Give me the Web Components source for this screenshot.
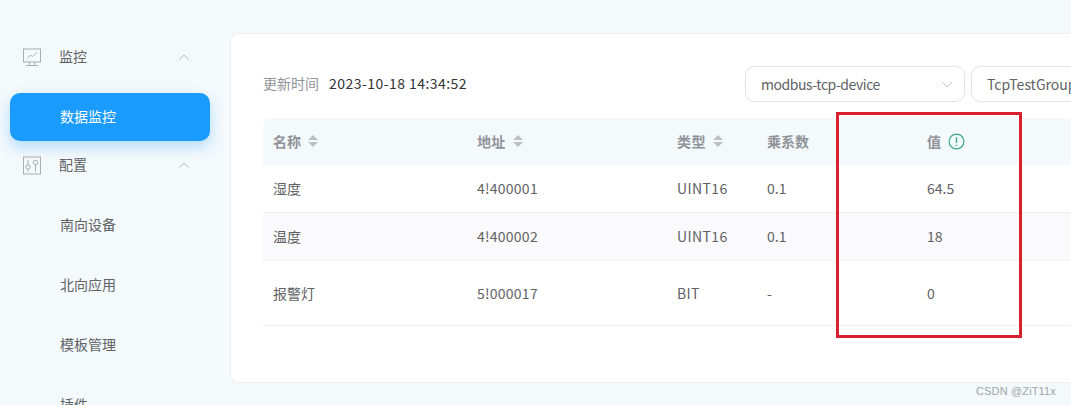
<!DOCTYPE html>
<html>
<head>
<meta charset="utf-8">
<style>
html,body{margin:0;height:405px;overflow:hidden}
body{background:#f4f9fc;font-family:"Noto Sans CJK SC","Noto Sans",sans-serif;font-size:14px;color:#444;position:relative}
#layout{display:flex;height:405px;overflow:hidden}
</style>
</head>
<body>
<div id="layout">
  <side-menu>
    <menu-title icon="monitor">监控</menu-title>
    <menu-link active>数据监控</menu-link>
    <menu-title icon="sliders">配置</menu-title>
    <menu-link>南向设备</menu-link>
    <menu-link>北向应用</menu-link>
    <menu-link>模板管理</menu-link>
    <menu-link>插件</menu-link>
  </side-menu>
  <main-card>
    <div slot="time">2023-10-18 14:34:52</div>
    <select-box slot="filters" style="width:220px;letter-spacing:-.45px">modbus-tcp-device</select-box>
    <select-box slot="filters" style="width:220px">TcpTestGroup</select-box>
    <value-table></value-table>
  </main-card>
</div>
<red-mark></red-mark>
<water-mark>CSDN @ZiT11x</water-mark>

<script>
const icons = {
  monitor: `<rect x="1.5" y="1" width="17" height="13" fill="none" stroke="currentColor"/>
    <path d="M5 10.5 L8.5 7 L10.5 8.5 L15 4.5" fill="none" stroke="currentColor" stroke-width=".9"/>
    <path d="M7.5 14V17.5M12.5 14V17.5M4 17.5H16" fill="none" stroke="currentColor"/>`,
  sliders: `<rect x="1.5" y="1" width="17" height="17" fill="none" stroke="currentColor"/>
    <path d="M6 4V15.5M13.5 4V15.5" fill="none" stroke="currentColor"/>
    <circle cx="6" cy="11" r="2.2" fill="#f4f9fc" stroke="currentColor"/>
    <circle cx="13.5" cy="6.5" r="2.2" fill="#f4f9fc" stroke="currentColor"/>`
}

class SideMenu extends HTMLElement {
  constructor() {
    super()
    this.attachShadow({mode:'open'})
    this.shadowRoot.innerHTML = `
    <style>
    :host{display:block;flex:0 0 230px;width:230px;box-sizing:border-box;padding:33px 20px 0 10px}
    </style>
    <slot></slot>`
  }
}

class MenuTitle extends HTMLElement {
  constructor() {
    super()
    this.attachShadow({mode:'open'})
    this.shadowRoot.innerHTML = `
    <style>
    :host{display:flex;align-items:center;height:48px;color:#606266;font-size:14px}
    svg.ico{width:19px;height:19px;margin-left:12px;color:#a9adb1}
    .txt{margin-left:18px;flex:1;margin-bottom:2px}
    svg.arrow{width:10px;height:6px;margin-right:21px;color:#b4b8bc}
    </style>
    <svg class="ico" viewBox="0 0 19 19">${icons[this.getAttribute('icon')]}</svg>
    <span class="txt"><slot></slot></span>
    <svg class="arrow" viewBox="0 0 10 6"><path d="M.5 5.5 L5 1 L9.5 5.5" fill="none" stroke="currentColor"/></svg>`
  }
}

class MenuLink extends HTMLElement {
  constructor() {
    super()
    this.attachShadow({mode:'open'})
    this.shadowRoot.innerHTML = `
    <style>
    :host{display:flex;align-items:center;box-sizing:border-box;height:48px;margin-top:12px;padding:0 0 2px 50px;border-radius:10px;color:#606266;font-size:14px}
    :host([active]){background:#1a9bff;color:#fff;box-shadow:0 6px 14px rgba(26,155,255,.3)}
    </style>
    <slot></slot>`
  }
}

class MainCard extends HTMLElement {
  constructor() {
    super()
    this.attachShadow({mode:'open'})
    this.shadowRoot.innerHTML = `
    <style>
    :host{display:block;flex:0 0 900px;box-sizing:border-box;height:350px;margin-top:33px;background:#fff;border:1px solid #eceff2;border-radius:8px 0 0 8px;padding:31px 0 0 32px}
    .top{display:flex;align-items:center;height:38px;margin-bottom:15px}
    .left{flex:0 0 482px;display:flex;align-items:center;padding-bottom:2px;box-sizing:border-box}
    .lbl{color:#909399;font-size:14px;margin-right:10px}
    .time{color:#333;font-size:14px;letter-spacing:.45px}
    .filters{display:flex;gap:6px}
    </style>
    <div class="top">
      <div class="left">
        <span class="lbl">更新时间</span>
        <span class="time"><slot name="time"></slot></span>
      </div>
      <div class="filters"><slot name="filters"></slot></div>
    </div>
    <slot></slot>`
  }
}

class SelectBox extends HTMLElement {
  constructor() {
    super()
    this.attachShadow({mode:'open'})
    this.shadowRoot.innerHTML = `
    <style>
    :host{display:flex;align-items:center;box-sizing:border-box;height:36px;padding:0 11px 0 15px;border:1px solid #dfe2e7;border-radius:9px;color:#606266;font-size:14px;background:#fff}
    span{flex:1;white-space:nowrap}
    svg{width:12px;height:7px;color:#c4c8cc}
    </style>
    <span><slot></slot></span>
    <svg viewBox="0 0 12 7"><path d="M1 1 L6 6 L11 1" fill="none" stroke="currentColor"/></svg>`
  }
}

const rows = [
  ['湿度','4!400001','UINT16','0.1','64.5',48],
  ['温度','4!400002','UINT16','0.1','18',48],
  ['报警灯','5!000017','BIT','-','0',65]
]
const sortIcon = `<svg class="sort" viewBox="0 0 10 12"><path d="M5 0 L10 5 H0Z M5 12 L0 7 H10Z" fill="#bcc0c4"/></svg>`

class ValueTable extends HTMLElement {
  constructor() {
    super()
    this.attachShadow({mode:'open'})
    const cols = 'grid-template-columns:204px 200px 90px 160px 1fr'
    this.shadowRoot.innerHTML = `
    <style>
    :host{display:block;width:867px}
    .row{display:grid;${cols};align-items:center;padding:0 0 1px 10px;border-bottom:1px solid #eef0f3;color:#606266;font-size:14px;box-sizing:border-box}
    .row:nth-child(4){background:#fafafc}
    .row span:nth-child(2){letter-spacing:.25px}
    .row span:nth-child(3){letter-spacing:.4px}
    .head{height:47px;background:#f4f9fc;border:none;border-radius:8px 8px 0 0;color:#909399;font-weight:700;font-size:14px}
    .head span{display:flex;align-items:center;gap:7px}
    .sort{width:10px;height:12px}
    .info{width:17px;height:17px}
    </style>
    <div class="row head">
      <span>名称${sortIcon}</span>
      <span>地址${sortIcon}</span>
      <span>类型${sortIcon}</span>
      <span>乘系数</span>
      <span>值<svg class="info" viewBox="0 0 16 16"><circle cx="8" cy="8" r="7" fill="none" stroke="#3aa886" stroke-width="1.1"/><path d="M8 4v5.5M8 11v1.3" stroke="#3aa886" stroke-width="1.3" fill="none"/></svg></span>
    </div>
    ${rows.map(r => `<div class="row" style="height:${r[5]}px">
      <span>${r[0]}</span><span>${r[1]}</span><span>${r[2]}</span><span>${r[3]}</span><span>${r[4]}</span>
    </div>`).join('')}`
  }
}

class RedMark extends HTMLElement {
  constructor() {
    super()
    this.attachShadow({mode:'open'})
    this.shadowRoot.innerHTML = `
    <style>
    :host{position:absolute;left:836px;top:112px;width:186px;height:226px;box-sizing:border-box;border:3px solid #d9202e}
    </style>`
  }
}

class WaterMark extends HTMLElement {
  constructor() {
    super()
    this.attachShadow({mode:'open'})
    this.shadowRoot.innerHTML = `
    <style>
    :host{position:absolute;right:15px;top:385px;font:11px "Liberation Sans",sans-serif;color:#a0a4a8;letter-spacing:.15px}
    </style>
    <slot></slot>`
  }
}

customElements.define('side-menu',SideMenu)
customElements.define('menu-title',MenuTitle)
customElements.define('menu-link',MenuLink)
customElements.define('main-card',MainCard)
customElements.define('select-box',SelectBox)
customElements.define('value-table',ValueTable)
customElements.define('red-mark',RedMark)
customElements.define('water-mark',WaterMark)
</script>
</body>
</html>
